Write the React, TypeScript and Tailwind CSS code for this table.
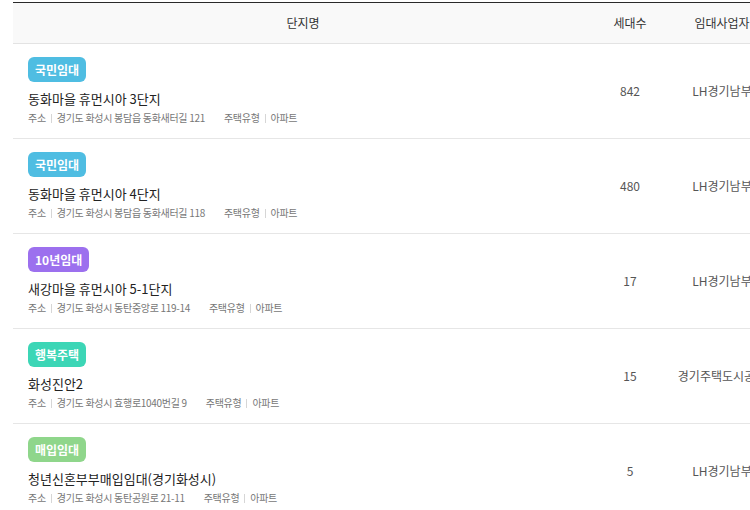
import React from "react";

type Complex = {
  type: string;
  badgeClass: string;
  name: string;
  address: string;
  houseType: string;
  units: number;
  operator: string;
};

const complexes: Complex[] = [
  {
    type: "국민임대",
    badgeClass: "bg-[#4fbde2]",
    name: "동화마을 휴먼시아 3단지",
    address: "경기도 화성시 봉담읍 동화새터길 121",
    houseType: "아파트",
    units: 842,
    operator: "LH경기남부",
  },
  {
    type: "국민임대",
    badgeClass: "bg-[#4fbde2]",
    name: "동화마을 휴먼시아 4단지",
    address: "경기도 화성시 봉담읍 동화새터길 118",
    houseType: "아파트",
    units: 480,
    operator: "LH경기남부",
  },
  {
    type: "10년임대",
    badgeClass: "bg-[#9c70ee]",
    name: "새강마을 휴먼시아 5-1단지",
    address: "경기도 화성시 동탄중앙로 119-14",
    houseType: "아파트",
    units: 17,
    operator: "LH경기남부",
  },
  {
    type: "행복주택",
    badgeClass: "bg-[#3cd6b6]",
    name: "화성진안2",
    address: "경기도 화성시 효행로1040번길 9",
    houseType: "아파트",
    units: 15,
    operator: "경기주택도시공사",
  },
  {
    type: "매입임대",
    badgeClass: "bg-[#8fd68b]",
    name: "청년신혼부부매입임대(경기화성시)",
    address: "경기도 화성시 동탄공원로 21-11",
    houseType: "아파트",
    units: 5,
    operator: "LH경기남부",
  },
];

const font = "font-['Noto_Sans_CJK_KR','Noto_Sans',sans-serif]";

const Divider = () => <span className="mx-[5px] inline-block h-[9px] w-px bg-[#d6d6d6]" />;

const App: React.FC = () => {
  return (
    <div className={`h-[510px] w-[750px] overflow-hidden bg-white pt-[2px] ${font}`}>
      <div className="ml-[13px] w-[764px] border-t border-[#2a2a2a]">
        {/* Header */}
        <div className="flex h-[41px] items-center border-b border-[#e3e3e3] bg-[#f9f9f9] text-[12px] text-[#333]">
          <div className="w-[580px] text-center">단지명</div>
          <div className="w-[74px] text-center">세대수</div>
          <div className="w-[110px] text-center">임대사업자</div>
        </div>

        {/* Rows */}
        {complexes.map((c, i) => (
          <div key={i} className="flex h-[95px] items-center border-b border-[#e6e6e6]">
            <div className="flex w-[580px] flex-col items-start pl-[15px]">
              <span
                className={`${c.badgeClass} flex h-[25px] items-center rounded-[6px] px-[7px] text-[12px] font-bold text-white`}
              >
                {c.type}
              </span>
              <p className="mt-[8px] text-[13px] leading-[18px] text-[#222]">{c.name}</p>
              <div className="mt-[3px] flex items-center text-[10px] leading-[14px] tracking-[-0.3px] text-[#777]">
                <span>주소</span>
                <Divider />
                <span>{c.address}</span>
                <span className="ml-[19px]">주택유형</span>
                <Divider />
                <span>{c.houseType}</span>
              </div>
            </div>
            <div className="w-[74px] text-center text-[12px] text-[#555]">{c.units}</div>
            <div className="w-[110px] whitespace-nowrap text-center text-[12px] text-[#555]">{c.operator}</div>
          </div>
        ))}
      </div>
    </div>
  );
};

export default App;
